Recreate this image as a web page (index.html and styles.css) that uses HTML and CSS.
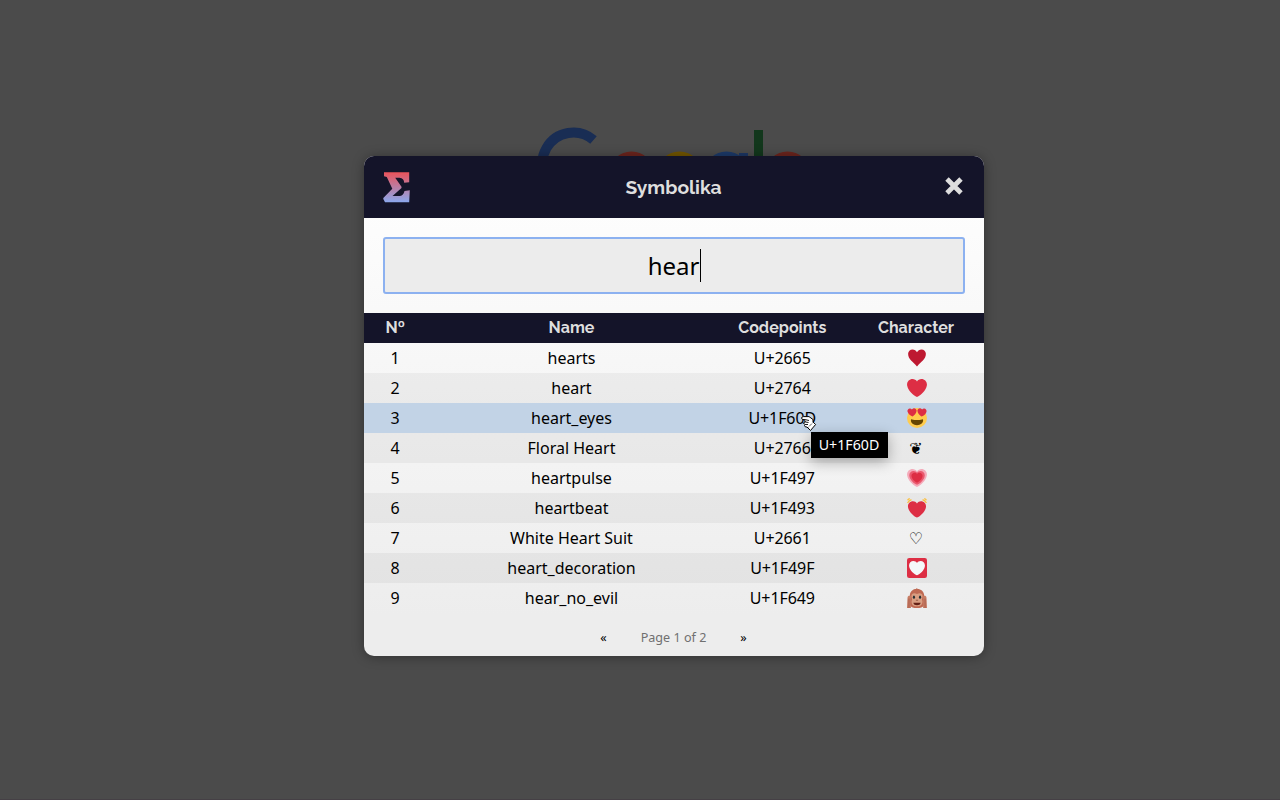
FILE: index.html
```html
<!DOCTYPE html>
<html lang="en">
<head>
<meta charset="utf-8">
<title>Symbolika</title>
<link rel="stylesheet" href="styles.css">
</head>
<body>
<svg class="backdrop-logo" viewBox="530 120 280 80" width="280" height="80" aria-hidden="true">
  <g fill="none" stroke-width="10">
    <path d="M593.5 140A31 31 0 1 0 604 168" stroke="#192d54"/>
    <circle cx="631.5" cy="174.500" r="18.500" stroke="#6b241d" stroke-width="9"/>
    <circle cx="679.500" cy="174.500" r="18.500" stroke="#705400" stroke-width="9"/>
    <circle cx="726.5" cy="174.500" r="18.500" stroke="#1c3968" stroke-width="9"/>
    <circle cx="787.500" cy="174.500" r="18.500" stroke="#6b241d" stroke-width="9"/>
  </g>
  <path d="M739 153h9v40h-9z" fill="#1c3663"/>
  <path d="M754 130h9v60h-9z" fill="#12371c"/>
</svg>
<svg class="defs" width="0" height="0" aria-hidden="true">
  <defs>
    <path id="heart" d="M35.885 11.833c0-5.45-4.418-9.868-9.867-9.868-3.308 0-6.227 1.633-8.018 4.129-1.791-2.496-4.71-4.129-8.017-4.129-5.45 0-9.868 4.417-9.868 9.868 0 .772.098 1.52.266 2.241C1.751 22.587 11.216 31.568 18 34.034c6.783-2.466 16.249-11.447 17.617-19.959.17-.721.268-1.469.268-2.242z"/>
  </defs>
</svg>
<main class="dialog">
  <header class="titlebar">
    <svg class="logo" viewBox="0 0 27 31" width="27" height="31">
      <defs><linearGradient id="sigma" x1="0" y1="0" x2="0" y2="1"><stop offset="0" stop-color="#eb535a"/><stop offset="1" stop-color="#8ba8ed"/></linearGradient></defs>
      <path fill="url(#sigma)" d="M1 .2H26.2V10.2L21.2 10.8Q21 6 16.5 5.7H12.2L18.5 14.7V16L9.5 24H17Q20.5 23.5 21.5 19L26.8 18.2L26.2 30.3H2L.3 27V26L9.3 16.8L3.8 5L1 4.2Z"/>
    </svg>
    <h1 class="title">Symbolika</h1>
    <svg class="close" viewBox="0 0 18 18" width="18" height="18"><path d="M2 2L16 16M16 2L2 16" stroke="#dedede" stroke-width="4.8"/></svg>
  </header>
  <div class="search"><div class="field">hear<span class="caret"></span></div></div>
  <div class="table">
    <div class="row head"><span>Nº</span><span>Name</span><span>Codepoints</span><span>Character</span></div>
    <div class="row"><span>1</span><span>hearts</span><span>U+2665</span><span><svg class="emoji" viewBox="0 0 36 36"><path fill="#be1931" d="M34 10.500C34 6 30.500 2.500 26 2.500c-3.500 0-6.500 2-8 5-1.500-3-4.500-5-8-5C5.500 2.500 2 6 2 10.500c0 10 9 14.500 16 23C25 25 34 20.500 34 10.500z"/></svg></span></div>
    <div class="row"><span>2</span><span>heart</span><span>U+2764</span><span><svg class="emoji" viewBox="0 0 36 36"><use href="#heart" fill="#dd2e44"/></svg></span></div>
    <div class="row selected"><span>3</span><span>heart_eyes</span><span>U+1F60D</span><span><svg class="emoji" viewBox="0 0 36 36"><circle cx="18" cy="18" r="18" fill="#ffcc4d"/><path fill="#664500" d="M18 21.500c-3.600 0-6-.4-9-1-.7-.1-2 0-2 2C7 26.500 11.600 31 18 31s11-4.500 11-8.500c0-2-1.300-2.100-2-2-3 .6-5.400 1-9 1z"/><use href="#heart" fill="#dd2e44" transform="translate(.3 .5) rotate(-5) scale(.46)"/><use href="#heart" fill="#dd2e44" transform="translate(19.2 -.900) rotate(5) scale(.46)"/></svg></span></div>
    <div class="row"><span>4</span><span>Floral Heart</span><span>U+2766</span><span class="glyph">❦</span></div>
    <div class="row"><span>5</span><span>heartpulse</span><span>U+1F497</span><span><svg class="emoji" viewBox="0 0 36 36"><use href="#heart" fill="#f4abba"/><use href="#heart" fill="#ea596e" transform="translate(4 3.800) scale(.78)"/><use href="#heart" fill="#dd2e44" transform="translate(8 7.500) scale(.56)"/></svg></span></div>
    <div class="row"><span>6</span><span>heartbeat</span><span>U+1F493</span><span><svg class="emoji" viewBox="0 0 36 36"><use href="#heart" fill="#dd2e44" transform="translate(1.600 4.200) scale(.91)"/><path d="M1 9Q3 5 8 3M1 4Q2 2 5 1M35 9Q33 5 28 3M35 4Q34 2 31 1" fill="none" stroke="#fcbf3c" stroke-width="2.200"/></svg></span></div>
    <div class="row"><span>7</span><span>White Heart Suit</span><span>U+2661</span><span class="glyph low">♡</span></div>
    <div class="row"><span>8</span><span>heart_decoration</span><span>U+1F49F</span><span><svg class="emoji" viewBox="0 0 36 36"><rect width="36" height="36" rx="4" fill="#dd2e44"/><use href="#heart" fill="#f5f8fa" transform="translate(3.600 4) scale(.8)"/></svg></span></div>
    <div class="row"><span>9</span><span>hear_no_evil</span><span>U+1F649</span><span><svg class="emoji" viewBox="0 0 36 36"><path fill="#bf6952" d="M5 13C6 5 12 2 16 2l2-2 1 2c6 0 11 4 12 11v18c-2 4-7 5-13 5S7 35 5 31z"/><path fill="#d99e82" d="M8 14c0-5 6-6 10-3 4-3 10-2 10 3 0 3-1 5-1 7 2 4 1 12-9 12S7 25 9 21c0-2-1-4-1-7z"/><path fill="#c77d64" d="M1 17c0-3 4-4 6-2v21H0zM35 17c0-3-4-4-6-2v21h7z"/><path d="M2.500 19v17M5 19v17M31 19v17M33.500 19v17" stroke="#a85b49" fill="none"/><ellipse cx="12.500" cy="16.500" rx="2" ry="2.800" fill="#292f33"/><ellipse cx="23.500" cy="16.500" rx="2" ry="2.800" fill="#292f33"/><path d="M16 22h4" stroke="#864e39" stroke-width="1.500"/><path d="M11.500 26.500h13c0 6-13 6-13 0z" fill="#642116"/></svg></span></div>
  </div>
  <footer class="pager"><span class="arrow">«</span><span class="page">Page 1 of 2</span><span class="arrow">»</span></footer>
</main>
<div class="tooltip">U+1F60D</div>
<svg class="cursor" viewBox="0 0 16 16" width="16" height="16">
  <path d="M.5 2Q1 .6 2.500 .6H8L12 3.500V6L14.600 8.500L9.500 14.500L6 11H4.500L3.500 9.500L4.500 8.500L2.500 7.500L3 6.200L4.500 6L3.500 4.800L4.500 3.700L1.500 3.500Z" fill="#fff" stroke="#000"/>
  <path d="M4.500 3.700L8 4.500M4.500 6L7.500 6.500M4.500 8.500L7 8.500" stroke="#000" stroke-width=".9" fill="none"/>
  <path d="M7 11.500L12.500 6" stroke="#000" fill="none" stroke-dasharray="1 1"/>
</svg>
</body>
</html>
```

FILE: styles.css
```css
* { box-sizing: border-box; }
body {
  margin: 0;
  height: 800px;
  overflow: hidden;
  background: #4b4b4b;
  border-bottom: 1px solid #454045;
  font: 16px/30px "Noto Sans", sans-serif;
  color: #000;
}
.backdrop-logo { position: absolute; left: 530px; top: 120px; }
.defs { position: absolute; }
.dialog {
  position: relative;
  width: 620px;
  height: 500px;
  margin: 156px 0 0 364px;
  display: flex;
  flex-direction: column;
  border-radius: 10px;
  overflow: hidden;
  background: linear-gradient(#fff, #ededed 92%);
  box-shadow: 0 1px 12px rgba(0, 0, 0, .35);
}
.titlebar {
  height: 62px;
  flex: none;
  display: grid;
  grid-template-columns: 27px 1fr 18px;
  align-items: center;
  padding: 0 21px 0 19px;
  background: #141429;
  color: #dedede;
}
.title {
  margin: 0;
  padding: 0 8px 1px 0;
  text-align: center;
  font: 700 19.2px/30px Raleway, Lato, sans-serif;
}
.close { margin-bottom: 2px; }
.search { height: 95px; flex: none; padding: 19px; }
.field {
  height: 57px;
  display: flex;
  align-items: center;
  justify-content: center;
  border: 2px solid #8cb1f0;
  border-radius: 3px;
  background: #ececec;
  font-size: 24px;
}
.caret { width: 1px; height: 33px; margin: 0 -1px 0 1px; background: #000; }
.table { flex: none; }
.row {
  height: 30px;
  display: grid;
  grid-template-columns: 62.4px 290.2px 131.400px 136px;
  text-align: center;
}
.row:nth-child(odd) { background: rgba(0, 0, 0, .045); }
.row.head {
  background: #141429;
  color: #dedede;
  font: 700 16px/29px Raleway, Lato, sans-serif;
}
.row.selected { background: #c2d3e6; }
.row:not(.head) > :nth-child(3) { letter-spacing: -.1px; }
.emoji { display: block; width: 20px; height: 20px; margin: 5px 0 0 59px; }
.glyph { font-family: "DejaVu Sans", sans-serif; line-height: 31px; }
.low { line-height: 32px; }
.pager {
  height: 43px;
  display: flex;
  justify-content: center;
  gap: 34px;
  padding: 10px 1px 0 0;
  font-size: 12.6px;
}
.page { color: #707070; }
.tooltip {
  position: absolute;
  left: 811px;
  top: 432px;
  width: 77px;
  height: 26px;
  padding-right: 1px;
  background: #000;
  color: #fff;
  font-size: 14.2px;
  line-height: 26px;
  text-align: center;
  box-shadow: 0 4px 14px rgba(0, 0, 0, .3);
}
.cursor { position: absolute; left: 801px; top: 416px; }
```
